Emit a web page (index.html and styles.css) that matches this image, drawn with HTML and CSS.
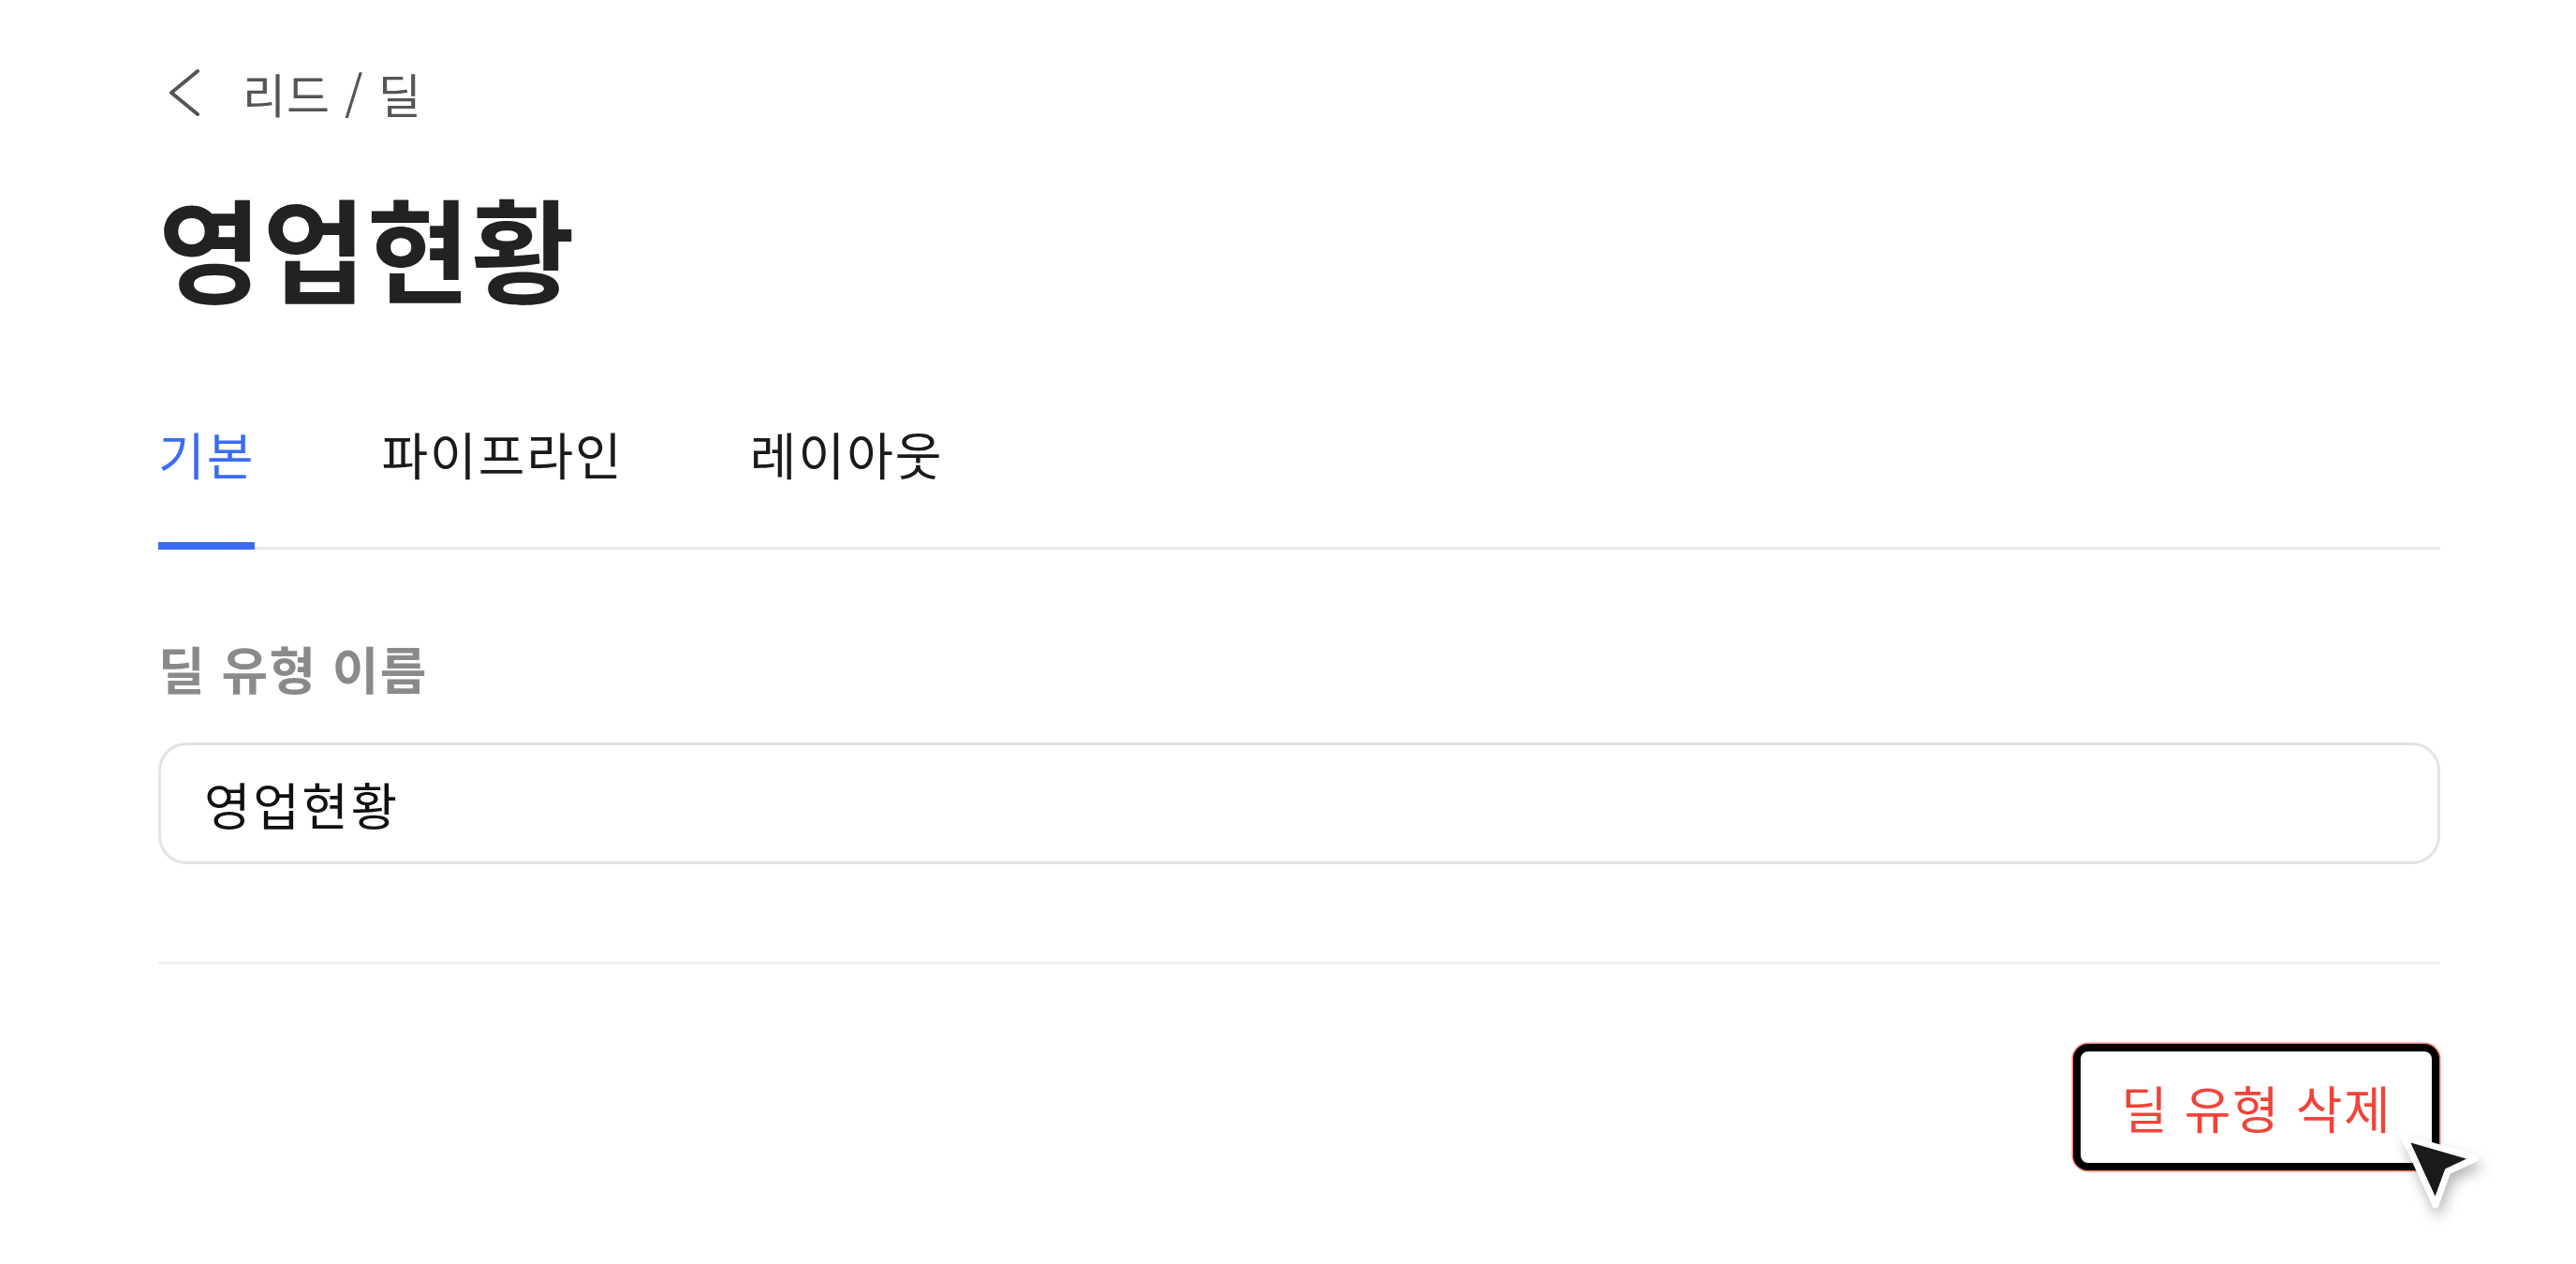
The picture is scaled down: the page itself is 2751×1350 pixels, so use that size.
FILE: index.html
```html
<!DOCTYPE html>
<html lang="ko">
<head>
<meta charset="utf-8">
<title>영업현황</title>
<link rel="stylesheet" href="styles.css">
</head>
<body>
<main class="page">
  <nav class="crumbs">
    <svg class="back" width="34" height="50" viewBox="0 0 34 50" aria-hidden="true">
      <polyline points="31,2 3,25 31,48" fill="none" stroke="#555" stroke-width="4" stroke-linecap="round" stroke-linejoin="round"/>
    </svg>
    <span class="crumb-text">리드 / 딜</span>
  </nav>
  <h1 class="title">영업현황</h1>
  <div class="tabs">
    <div class="tab active">기본</div>
    <div class="tab">파이프라인</div>
    <div class="tab">레이아웃</div>
  </div>
  <label class="field-label" for="dealName">딜 유형 이름</label>
  <input class="field-input" id="dealName" type="text" value="영업현황">
  <hr class="divider">
  <div class="actions">
    <div class="btn-wrap">
      <button class="btn-delete" type="button">딜 유형 삭제</button>
      <svg class="cursor" width="96" height="96" viewBox="0 0 96 96" aria-hidden="true">
        <polygon points="6,6 82,28 52,42 39,78" fill="#1a1a1a" stroke="#fff" stroke-width="7" stroke-linejoin="round"/>
      </svg>
    </div>
  </div>
</main>
</body>
</html>
```

FILE: styles.css
```css
* { box-sizing: border-box; }
html, body { margin: 0; background: #fff; min-height: 1350px; }
body {
  font-family: "Noto Sans CJK KR", "Noto Sans", sans-serif;
  color: #1a1a1a;
}
.page {
  width: 2751px;
  min-height: 1350px;
  padding: 0 145px 0 169px;
  display: flex;
  flex-direction: column;
}
.crumbs {
  display: flex;
  align-items: center;
  padding-top: 69px;
  height: 129px;
}
.back { margin-left: 11px; flex: none; }
.crumb-text {
  margin-left: 45px;
  font-size: 50px;
  line-height: 60px;
  color: #555;
  letter-spacing: 1px;
}
.title {
  margin: 64px 0 0;
  font-size: 120px;
  line-height: 140px;
  font-weight: 700;
  color: #222;
  letter-spacing: 1px;
}
.tabs {
  margin-top: 122px;
  display: flex;
  align-items: flex-start;
  gap: 135px;
  border-bottom: 3px solid #ececec;
}
.tab {
  font-size: 54px;
  line-height: 60px;
  letter-spacing: 2px;
  color: #1a1a1a;
  padding-bottom: 64px;
  border-bottom: 8px solid transparent;
  margin-bottom: -3px;
}
.tab.active {
  color: #3a6cf4;
  border-bottom-color: #3a6cf4;
}
.field-label {
  margin-top: 97px;
  font-size: 54px;
  line-height: 60px;
  font-weight: 700;
  color: #8a8a8a;
  letter-spacing: 1.3px;
}
.field-input {
  margin-top: 49px;
  width: 100%;
  height: 130px;
  border: 3px solid #e3e3e3;
  border-radius: 30px;
  padding: 0 44px 0 46px;
  font-family: inherit;
  font-size: 54px;
  letter-spacing: 2.5px;
  color: #111;
  background: #fff;
  outline: none;
}
.divider {
  margin: 104px 0 0;
  border: 0;
  height: 3px;
  background: #efefef;
}
.actions {
  margin-top: 85px;
  display: flex;
  justify-content: flex-end;
}
.btn-wrap {
  position: relative;
  margin-right: 1px;
}
.btn-delete {
  display: block;
  width: 391px;
  height: 135px;
  border: 8px solid #000;
  border-radius: 16px;
  background: #fff;
  box-shadow: 0 0 0 1.5px rgba(240, 68, 58, 0.7);
  font-family: inherit;
  font-size: 54px;
  letter-spacing: 1.5px;
  color: #f0443a;
  padding: 0;
}
.cursor {
  position: absolute;
  left: 348px;
  top: 94px;
  filter: drop-shadow(3px 8px 7px rgba(0, 0, 0, 0.28));
}
```
